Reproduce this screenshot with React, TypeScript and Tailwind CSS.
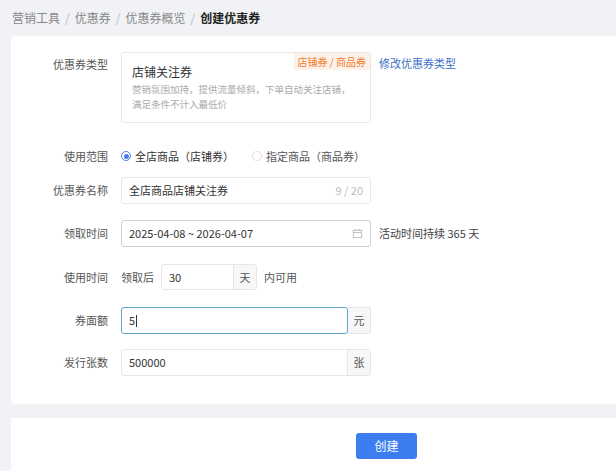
import React from "react";

const Label = ({ children }: { children: React.ReactNode }) => (
  <div className="w-[110px] shrink-0 text-right pr-[13px] text-[11px] text-[#555]">{children}</div>
);

export default function App() {
  return (
    <div className="w-[616px] h-[471px] bg-[#f0f2f5] overflow-hidden text-[#333]" style={{ fontFamily: '"Noto Sans CJK SC","Noto Sans",sans-serif' }}>
      <div className="h-[36px] pl-[12px] flex items-center text-[12px] text-[#888]">
        <span>营销工具</span><span className="mx-[5px] text-[#bbb]">/</span>
        <span>优惠券</span><span className="mx-[5px] text-[#bbb]">/</span>
        <span>优惠券概览</span><span className="mx-[5px] text-[#bbb]">/</span>
        <span className="font-bold text-[#222]">创建优惠券</span>
      </div>
      <div className="ml-[11px] bg-white rounded-l-[4px] h-[368px] pt-[16px]">
        <div className="flex items-start">
          <div className="pt-[4px]"><Label>优惠券类型</Label></div>
          <div className="relative w-[250px] h-[71px] border border-[#e6e6e6] rounded-[3px] px-[10px] pt-[10px]">
            <span className="absolute right-0 top-0 px-[4px] py-[1px] text-[10px] text-[#f07b2f] bg-[#fdf1e8]">店铺券 / 商品券</span>
            <div className="text-[12px] text-[#333]">店铺关注券</div>
            <div className="text-[9.5px] leading-[15px] text-[#aaa] mt-[1px] whitespace-nowrap">营销氛围加持，提供流量倾斜，下单自动关注店铺，<br />满足条件不计入最低价</div>
          </div>
          <span className="ml-[8px] mt-[3px] text-[11px] text-[#3b6fc4]">修改优惠券类型</span>
        </div>
        <div className="flex items-center mt-[25px] h-[16px]">
          <Label>使用范围</Label>
          <span className="w-[10px] h-[10px] rounded-full border border-[#4a7ee8] flex items-center justify-center"><span className="w-[5px] h-[5px] rounded-full bg-[#4a7ee8]" /></span>
          <span className="ml-[4px] text-[11px] text-[#333]">全店商品（店铺券）</span>
          <span className="ml-[18px] w-[10px] h-[10px] rounded-full border border-[#ddd]" />
          <span className="ml-[4px] text-[11px] text-[#555]">指定商品（商品券）</span>
        </div>
        <div className="flex items-center mt-[13px]">
          <Label>优惠券名称</Label>
          <div className="w-[250px] h-[27px] border border-[#e6e6e6] rounded-[3px] flex items-center justify-between px-[7px] text-[11px]">
            <span>全店商品店铺关注券</span><span className="text-[#bbb]">9 / 20</span>
          </div>
        </div>
        <div className="flex items-center mt-[16px]">
          <Label>领取时间</Label>
          <div className="w-[250px] h-[27px] border border-[#d0d0d0] rounded-[3px] flex items-center justify-between px-[7px] text-[11px]">
            <span>2025-04-08 ~ 2026-04-07</span>
            <svg width="11" height="11" viewBox="0 0 12 12" fill="none" stroke="#bbb"><rect x="1.5" y="2.5" width="9" height="8" /><path d="M1.5 5h9M4 1v2M8 1v2" /></svg>
          </div>
          <span className="ml-[8px] text-[11px] text-[#444]">活动时间持续 365 天</span>
        </div>
        <div className="flex items-center mt-[17px]">
          <Label>使用时间</Label>
          <span className="text-[11px] text-[#555]">领取后</span>
          <div className="ml-[7px] w-[96px] h-[26px] border border-[#e6e6e6] rounded-[3px] flex text-[11px]">
            <span className="flex-1 flex items-center px-[7px]">30</span>
            <span className="w-[23px] bg-[#f7f7f7] border-l border-[#e6e6e6] flex items-center justify-center text-[#555]">天</span>
          </div>
          <span className="ml-[7px] text-[11px] text-[#555]">内可用</span>
        </div>
        <div className="flex items-center mt-[17px]">
          <Label>券面额</Label>
          <div className="w-[250px] h-[27px] flex text-[11px]">
            <span className="flex-1 border border-[#5aa7c8] rounded-[3px] flex items-center px-[7px]">5<span className="w-px h-[12px] bg-[#333] ml-[1px]" /></span>
            <span className="w-[23px] bg-[#f7f7f7] border border-l-0 border-[#e6e6e6] rounded-r-[3px] flex items-center justify-center text-[#555]">元</span>
          </div>
        </div>
        <div className="flex items-center mt-[15px]">
          <Label>发行张数</Label>
          <div className="w-[250px] h-[27px] flex border border-[#e6e6e6] rounded-[3px] text-[11px]">
            <span className="flex-1 flex items-center px-[7px]">500000</span>
            <span className="w-[23px] bg-[#f7f7f7] border-l border-[#e6e6e6] flex items-center justify-center text-[#555]">张</span>
          </div>
        </div>
      </div>
      <div className="ml-[11px] mt-[14px] bg-white h-[60px] pt-[14px]">
        <button className="ml-[345px] w-[61px] h-[26px] rounded-[3px] bg-[#3c7ef0] text-white text-[12px]">创建</button>
      </div>
    </div>
  );
}
